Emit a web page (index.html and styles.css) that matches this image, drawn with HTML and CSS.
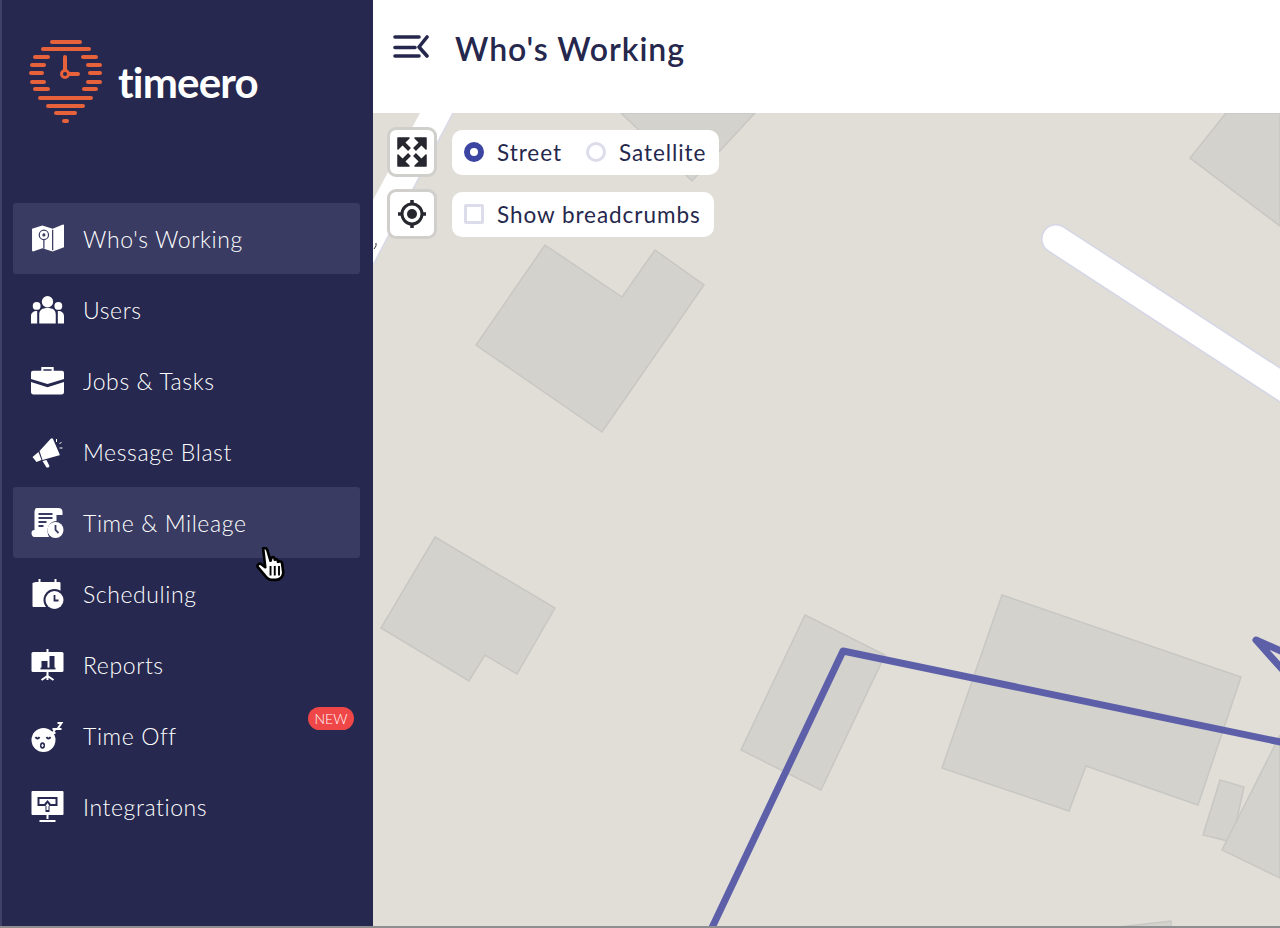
FILE: index.html
```html
<!DOCTYPE html>
<html lang="en">
<head>
<meta charset="utf-8">
<title>Who's Working</title>
<link rel="stylesheet" href="styles.css">
</head>
<body>
<div class="app">
  <aside class="sidebar">
    <div class="brand">
      <svg class="logo-mark" viewBox="26 36 80 90">
        <g class="logo-lines">
          <path d="M52 42H80M43 49H89M35 57H48M83 57H96M32 65H44M88 65H100M31 73H42M90 73H100M32 82H44M88 82H100M35 89H48M84 89H96M40 98H91M48 106H83M56 113H75M64 121H67"/>
          <path d="M65 57V70M69 74H78"/>
          <circle cx="65" cy="74" r="3.5"/>
        </g>
      </svg>
      <span class="logo-text">timeero</span>
    </div>
    <nav class="nav">
      <a class="nav-item active">
        <svg class="icon" viewBox="0 0 32 30"><path class="w" d="M1 5l10-3 10 3 10-4c.6 0 1 .4 1 1v21l-11 4-10-3-9 3c-.6 0-1-.4-1-1z"/><path class="d-thin" d="M21 6v20"/><circle class="d-thin" cx="12.500" cy="11" r="4.500"/><circle class="d" cx="12.500" cy="11" r="1.500"/><path class="d-thin" d="M12.500 15.500v9"/></svg>
        <span>Who's Working</span>
      </a>
      <a class="nav-item">
        <svg class="icon" viewBox="0 0 32 28"><circle class="w" cx="16" cy="6" r="5.500"/><circle class="w" cx="5.500" cy="10" r="3.800"/><circle class="w" cx="26.500" cy="10" r="3.800"/><path class="w" d="M8 27V18c0-4 3-6 8-6s8 2 8 6v9zM0 27v-7c0-3 2-5 6-5v12zM32 27v-7c0-3-2-5-6-5v12z"/></svg>
        <span>Users</span>
      </a>
      <a class="nav-item">
        <svg class="icon" viewBox="0 0 32 28"><path class="w-line" d="M11 5V1.500h10V5"/><path class="w" d="M2 4h28a2 2 0 0 1 2 2v6l-16 5-16-5V6a2 2 0 0 1 2-2zM0 15l16 5 16-5v10a2 2 0 0 1-2 2H2a2 2 0 0 1-2-2z"/></svg>
        <span>Jobs &amp; Tasks</span>
      </a>
      <a class="nav-item">
        <svg class="icon" viewBox="0 0 32 32"><path class="w" d="M1 21l6-5 3 8-5 2zM8 15L19 3c1-1 2-1 2.500 0L28 18c.4 1 0 1.500-1 1.500L11 24zM11 25l4-1 3 6-1 1.500h-2z"/><path class="w-thin" d="M25 3v3M30 6l-2 2M31 12h-3"/></svg>
        <span>Message Blast</span>
      </a>
      <a class="nav-item active">
        <svg class="icon" viewBox="0 0 32 32"><path class="w" d="M5 1h22c3 0 4 2 4 4v3h-6v6c-5 0-9 4-9 10 0 2 .5 4 1.500 6H3c-2 0-3-2-3-4s1-3 3-3V5c0-2 1-4 2-4z"/><path class="d-line" d="M7 7h14M7 11h14M7 15h8M7 19h5"/><circle class="w" cx="24" cy="23" r="8"/><path class="d-line" d="M24 18v5l3 3"/></svg>
        <span>Time &amp; Mileage</span>
      </a>
      <a class="nav-item">
        <svg class="icon" viewBox="0 0 32 32"><path class="w" d="M4 4h3V1h2v3h14V1h2v3h3a1 1 0 0 1 1 1v24H2a1 1 0 0 1-1-1V5z"/><circle class="d" cx="23" cy="22" r="11"/><circle class="w" cx="23" cy="22" r="9"/><path class="d-line" d="M23 17v5.500h4"/></svg>
        <span>Scheduling</span>
      </a>
      <a class="nav-item">
        <svg class="icon" viewBox="0 0 32 32"><path class="w-line" d="M16 0v3M16 23v5M10 31l6-4 6 4M16 27v4"/><rect class="w" x="0" y="3" width="32" height="20" rx="1.500"/><rect class="d" x="10" y="12" width="6" height="7"/><rect class="d" x="18" y="7" width="5" height="12"/><path class="d-line" d="M9 19.500h15"/></svg>
        <span>Reports</span>
      </a>
      <a class="nav-item">
        <svg class="icon" viewBox="0 0 32 32"><circle class="w" cx="12" cy="20" r="12"/><path class="d-line" d="M4 17c1 2 3 2 4 0M15 17c1 2 3 2 4 0"/><ellipse class="d" cx="11" cy="25.500" rx="2.500" ry="3.200"/><ellipse class="w" cx="11" cy="25.500" rx="1" ry="1.500"/><path class="w-line" d="M21 9h3l-3 4h3M26 3h4l-4 6h4"/></svg>
        <span>Time Off</span>
        <em class="badge">NEW</em>
      </a>
      <a class="nav-item">
        <svg class="icon" viewBox="0 0 32 32"><rect class="w" x="0" y="0" width="32" height="24" rx="1"/><rect class="d" x="6" y="6" width="20" height="9"/><rect class="w" x="8" y="8" width="16" height="5"/><path class="d" d="M16 9l5 6h-3v6h-4v-6h-3z"/><path class="w" d="M16 12l2 3h-1v4h-2v-4h-1z"/><path class="w-line" d="M16 24v4M8 30h16"/></svg>
        <span>Integrations</span>
      </a>
    </nav>
    <svg class="cursor" viewBox="0 2 27 34">
      <path class="cursor-body" d="M7 3c2-1 3 0 4 2l3 10 1-3c2-1 3 0 3 2 2-1 3 0 3 2 2-1 4 0 4 2l1 8c0 4-3 7-7 7h-4c-3 0-5-2-7-5l-6-7c-1-2 1-4 3-3l4 3z"/>
      <path class="cursor-lines" d="M14 20v9M18 20v9M22 20v9"/>
    </svg>
  </aside>
  <main class="main">
    <header class="topbar">
      <svg class="menu-icon" viewBox="0 0 36 24"><path d="M2 3H26M2 13.500H22M2 22H26M34 3L26 13l8 9"/></svg>
      <h1 class="title">Who's Working</h1>
    </header>
    <section class="map">
      <svg class="map-canvas" viewBox="373 113 907 813" preserveAspectRatio="none">
        <path class="road" d="M420 113L373 200V265L453 113Z"/>
        <path class="road-edge" d="M453 113L373 265"/>
        <path class="capsule-edge" d="M1056 239L1300 398"/>
        <path class="capsule" d="M1056 239L1300 398"/>
        <path class="bldg" d="M621 113L692 181L755 113Z"/>
        <path class="bldg" d="M1226 113L1190 158L1280 226V113Z"/>
        <path class="bldg" d="M545 245L622 297L655 250L704 285L602 432L476 345Z"/>
        <path class="bldg" d="M435 537L555 608L517 674L485 655L469 681L381 628Z"/>
        <path class="bldg" d="M805 615L885 655L821 790L741 750Z"/>
        <path class="bldg" d="M1002 595L1241 677L1198 805L1086 766L1069 811L942 768Z"/>
        <path class="bldg" d="M1220 780L1244 787L1232 842L1203 835Z"/>
        <path class="bldg" d="M1280 735L1222 850L1280 878Z"/>
        <path class="bldg" d="M1110 928L1171 921V928Z"/>
        <path class="route" d="M709 934L843 651L1290 744M1290 678L1256 640L1290 655"/>
        <path class="tick" d="M376 243v3l-2 3"/>
      </svg>
      <div class="controls">
        <button class="map-btn">
          <svg viewBox="0 0 30 30"><g class="fs-arrows"><path d="M1 1h11L1 12z"/><path d="M29 1H18l11 11z"/><path d="M1 29h11L1 18z"/><path d="M29 29H18l11-11z"/></g><path class="fs-stem" d="M6 6l6.500 6.500M24 6l-6.500 6.500M6 24l6.500-6.500M24 24l-6.500-6.500"/></svg>
        </button>
        <div class="panel">
          <label class="opt"><i class="radio on"></i>Street</label>
          <label class="opt"><i class="radio"></i>Satellite</label>
        </div>
        <button class="map-btn">
          <svg viewBox="0 0 30 30"><circle class="loc-ring" cx="15" cy="15" r="10"/><circle class="loc-dot" cx="15" cy="15" r="5"/><path class="loc-tick" d="M15 1v4M15 25v4M1 15h4M25 15h4"/></svg>
        </button>
        <div class="panel">
          <label class="opt"><i class="check"></i>Show breadcrumbs</label>
        </div>
      </div>
    </section>
  </main>
</div>
</body>
</html>
```
FILE: styles.css
```css
* { box-sizing: border-box; }
html, body { margin: 0; }
body { font-family: Lato, "Noto Sans", sans-serif; background: #fff; overflow: hidden; height: 928px; border-bottom: 2px solid #8e8e90; }
.app { display: flex; height: 926px; }

.sidebar { position: relative; flex: 0 0 373px; background: #26284f; border-left: 2px solid #3f4168; color: #fff; }
.brand { height: 203px; display: flex; align-items: flex-start; padding: 36px 0 0 24px; }
.logo-mark { width: 80px; height: 90px; flex: none; }
.logo-lines path { fill: none; stroke: #e7623a; stroke-width: 4; stroke-linecap: round; }
.logo-lines circle { fill: none; stroke: #e7623a; stroke-width: 3; }
.logo-text { font-size: 42px; font-weight: 700; letter-spacing: -0.8px; line-height: 48px; margin: 22px 0 0 12px; color: #fff; }

.nav { display: flex; flex-direction: column; padding: 0 13px 0 11px; }
.nav-item { position: relative; height: 71px; display: flex; align-items: center; padding-left: 18px; font-size: 23px; font-weight: 300; letter-spacing: 0.6px; color: #fff; border-radius: 3px; }
.nav-item.active { background: #393b62; }
.icon { width: 33px; height: 32px; flex: none; margin-right: 19px; }
.w { fill: #fff; }
.d { fill: #26284f; }
.nav-item.active .d { fill: #393b62; }
.w-line { fill: none; stroke: #fff; stroke-width: 2; }
.w-thin { fill: none; stroke: #fff; stroke-width: 1; }
.d-line { fill: none; stroke: #26284f; stroke-width: 1.800; }
.nav-item.active .d-line { stroke: #393b62; }
.d-thin { fill: none; stroke: #26284f; stroke-width: 1.200; }
.nav-item.active .d-thin { stroke: #393b62; }
.badge { position: absolute; right: 6px; top: 7px; width: 46px; height: 23px; border-radius: 12px; background: #ef4648; color: #fff; font-style: normal; font-size: 14px; letter-spacing: 0; line-height: 23px; text-align: center; }

.cursor { position: absolute; left: 252px; top: 547px; width: 32px; height: 36px; }
.cursor-body { fill: #fff; stroke: #000; stroke-width: 2.500; stroke-linejoin: round; }
.cursor-lines { fill: none; stroke: #000; stroke-width: 1.800; }

.main { flex: 1; display: flex; flex-direction: column; min-width: 0; }
.topbar { height: 113px; flex: none; background: #fff; display: flex; align-items: flex-start; padding: 34px 0 0 20px; }
.menu-icon { width: 36px; height: 24px; flex: none; margin-right: 26px; }
.menu-icon path { fill: none; stroke: #25274d; stroke-width: 3.600; stroke-linecap: round; stroke-linejoin: round; }
.title { margin: -4px 0 0; font-size: 32px; font-weight: 600; letter-spacing: 0.95px; line-height: 38px; color: #25274d; }

.map { position: relative; flex: 1; background: #e1ded8; overflow: hidden; }
.map-canvas { position: absolute; inset: 0; width: 100%; height: 100%; }
.road { fill: #fff; }
.road-edge { fill: none; stroke: #d8d9e8; stroke-width: 1.500; }
.capsule { fill: none; stroke: #fff; stroke-width: 27; stroke-linecap: round; }
.capsule-edge { fill: none; stroke: #d5d6e6; stroke-width: 30; stroke-linecap: round; }
.bldg { fill: #d3d2cd; stroke: #c8c7c3; stroke-width: 1.500; }
.route { fill: none; stroke: #5d60a9; stroke-width: 7; stroke-linejoin: round; stroke-linecap: round; }
.tick { fill: none; stroke: #333; stroke-width: 1; }

.controls { position: absolute; left: 14px; top: 14px; display: grid; grid-template-columns: 50px auto; column-gap: 15px; row-gap: 12px; align-items: center; justify-items: start; }
.map-btn { width: 50px; height: 50px; padding: 0; background: #fff; border: 3px solid #d0cfcc; border-radius: 9px; display: flex; align-items: center; justify-content: center; }
.map-btn svg { width: 30px; height: 30px; }
.fs-arrows path { fill: #26272f; stroke: #26272f; stroke-width: 1.500; stroke-linejoin: round; }
.fs-stem { fill: none; stroke: #26272f; stroke-width: 4; }
.loc-ring { fill: none; stroke: #26272f; stroke-width: 3; }
.loc-dot { fill: #26272f; }
.loc-tick { fill: none; stroke: #26272f; stroke-width: 3.500; }
.panel { height: 45px; background: #fff; border-radius: 10px; display: flex; align-items: center; padding: 0 13px 0 12px; gap: 24px; font-size: 22.500px; color: #25274d; letter-spacing: 0.95px; }
.opt { display: flex; align-items: center; white-space: nowrap; }
.radio { width: 20px; height: 20px; margin-right: 13px; border-radius: 50%; border: 3px solid #dcdcea; background: #fff; }
.radio.on { border: 6.500px solid #3d45a2; }
.check { width: 20px; height: 20px; margin-right: 13px; border: 3px solid #dcdcea; border-radius: 2px; background: #fff; }
```
